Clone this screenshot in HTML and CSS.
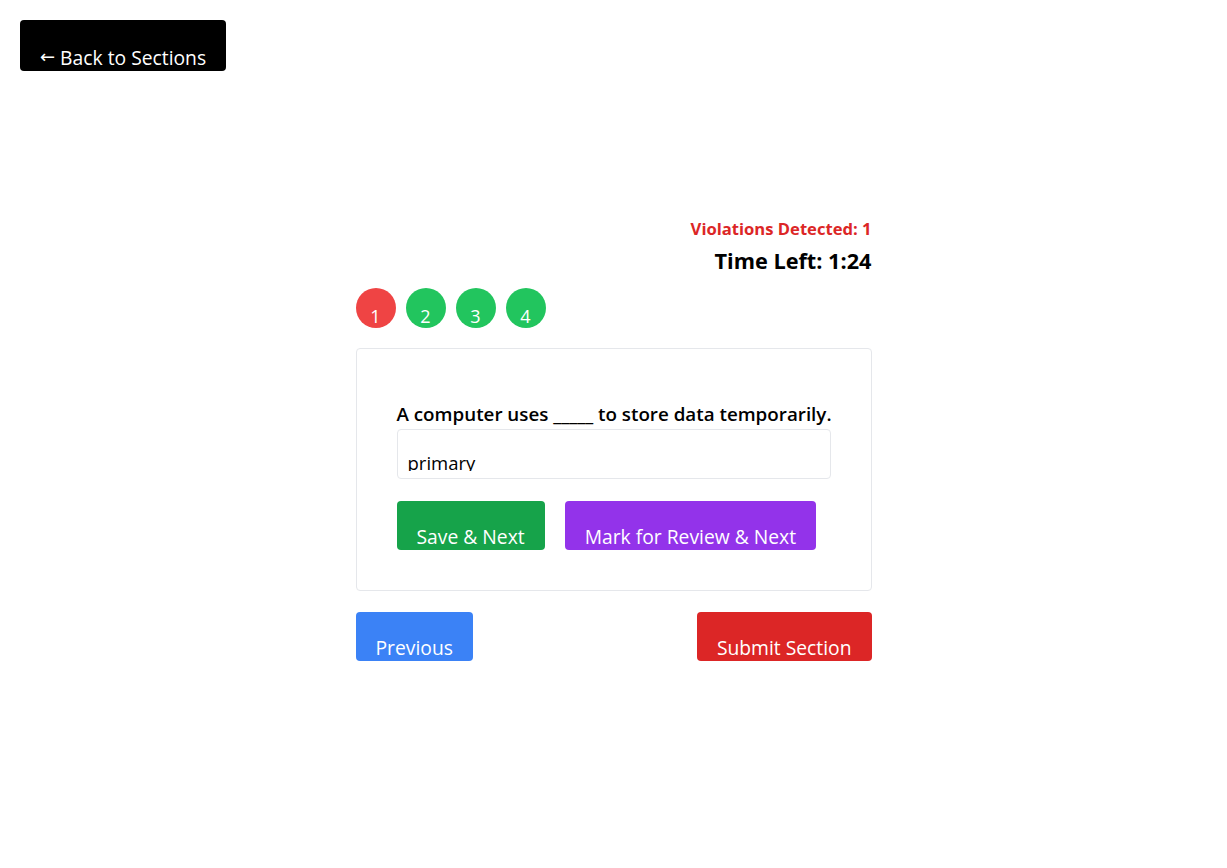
FILE: index.html
```html
<!DOCTYPE html>
<html lang="en">
<head>
<meta charset="utf-8">
<title>Section Test</title>
<link rel="stylesheet" href="styles.css">
</head>
<body>
<div class="page">
  <button class="btn btn-back"><span class="arrow">←</span> Back to Sections</button>
  <main class="exam">
    <div class="status">
      <div class="violations">Violations Detected: 1</div>
      <div class="timer">Time Left: 1:24</div>
    </div>
    <div class="palette">
      <span class="qnum qnum-red">1</span>
      <span class="qnum qnum-green">2</span>
      <span class="qnum qnum-green">3</span>
      <span class="qnum qnum-green">4</span>
    </div>
    <section class="card">
      <p class="question">A computer uses _____ to store data temporarily.</p>
      <div class="answer"><div class="answer-clip"><input class="answer-input" type="text" value="primary"></div></div>
      <div class="actions">
        <button class="btn btn-green">Save &amp; Next</button>
        <button class="btn btn-purple">Mark for Review &amp; Next</button>
      </div>
    </section>
    <div class="nav">
      <button class="btn btn-blue">Previous</button>
      <button class="btn btn-red">Submit Section</button>
    </div>
  </main>
</div>
</body>
</html>
```
FILE: styles.css
```css
* { box-sizing: border-box; }
html, body { margin: 0; padding: 0; background: #fff; }
body {
  font-family: "Open Sans", "Noto Sans", sans-serif;
  color: #000;
}
.page { padding: 20px; }

.btn {
  font-family: inherit;
  border: none;
  border-radius: 4px;
  color: #fff;
  height: 49px;
  padding: 23px 20px 0;
  font-size: 19.3px;
  line-height: 22px;
  cursor: pointer;
  display: inline-block;
  vertical-align: top;
  text-align: left;
  white-space: nowrap;
}
.btn-back {
  background: #000;
  height: 51px;
  padding-top: 25px;
}
.arrow {
  font-family: "DejaVu Sans", sans-serif;
  font-size: 18px;
  position: relative;
  top: -2px;
}
.btn-green { background: #16a34a; }
.btn-purple { background: #9333ea; }
.btn-blue { background: #3b82f6; }
.btn-red { background: #dc2626; }

.exam {
  width: 516px;
  margin: 148px auto 0;
  display: flex;
  flex-direction: column;
}
.status { text-align: right; }
.violations {
  color: #dc2626;
  font-weight: 700;
  font-size: 16.6px;
  line-height: 20px;
}
.timer {
  font-weight: 700;
  font-size: 21.7px;
  line-height: 28px;
  margin-top: 8px;
}
.palette {
  display: flex;
  gap: 10px;
  margin-top: 13px;
}
.qnum {
  width: 40px;
  height: 40px;
  border-radius: 50%;
  color: #fff;
  font-size: 18px;
  line-height: 20px;
  padding-top: 18px;
  text-align: center;
  overflow: hidden;
}
.qnum-red { background: #ef4444; }
.qnum-green { background: #22c55e; }

.card {
  margin-top: 20px;
  border: 1px solid #e5e7eb;
  border-radius: 4px;
  padding: 53px 40px 40px;
}
.question {
  margin: 0;
  font-size: 18.8px;
  font-weight: 600;
  line-height: 24px;
  white-space: nowrap;
}
.answer {
  margin-top: 3px;
  height: 50px;
  border: 1px solid #e5e7eb;
  border-radius: 4px;
}
.answer-clip {
  height: 41px;
  overflow: hidden;
}
.answer-input {
  display: block;
  width: 100%;
  height: 48px;
  border: none;
  outline: none;
  background: transparent;
  font-family: inherit;
  font-size: 18.5px;
  line-height: 19px;
  padding: 23px 10px 6px;
  color: #000;
}
.actions {
  display: flex;
  gap: 20px;
  margin-top: 22px;
}
.nav {
  display: flex;
  justify-content: space-between;
  margin-top: 21px;
}
```
